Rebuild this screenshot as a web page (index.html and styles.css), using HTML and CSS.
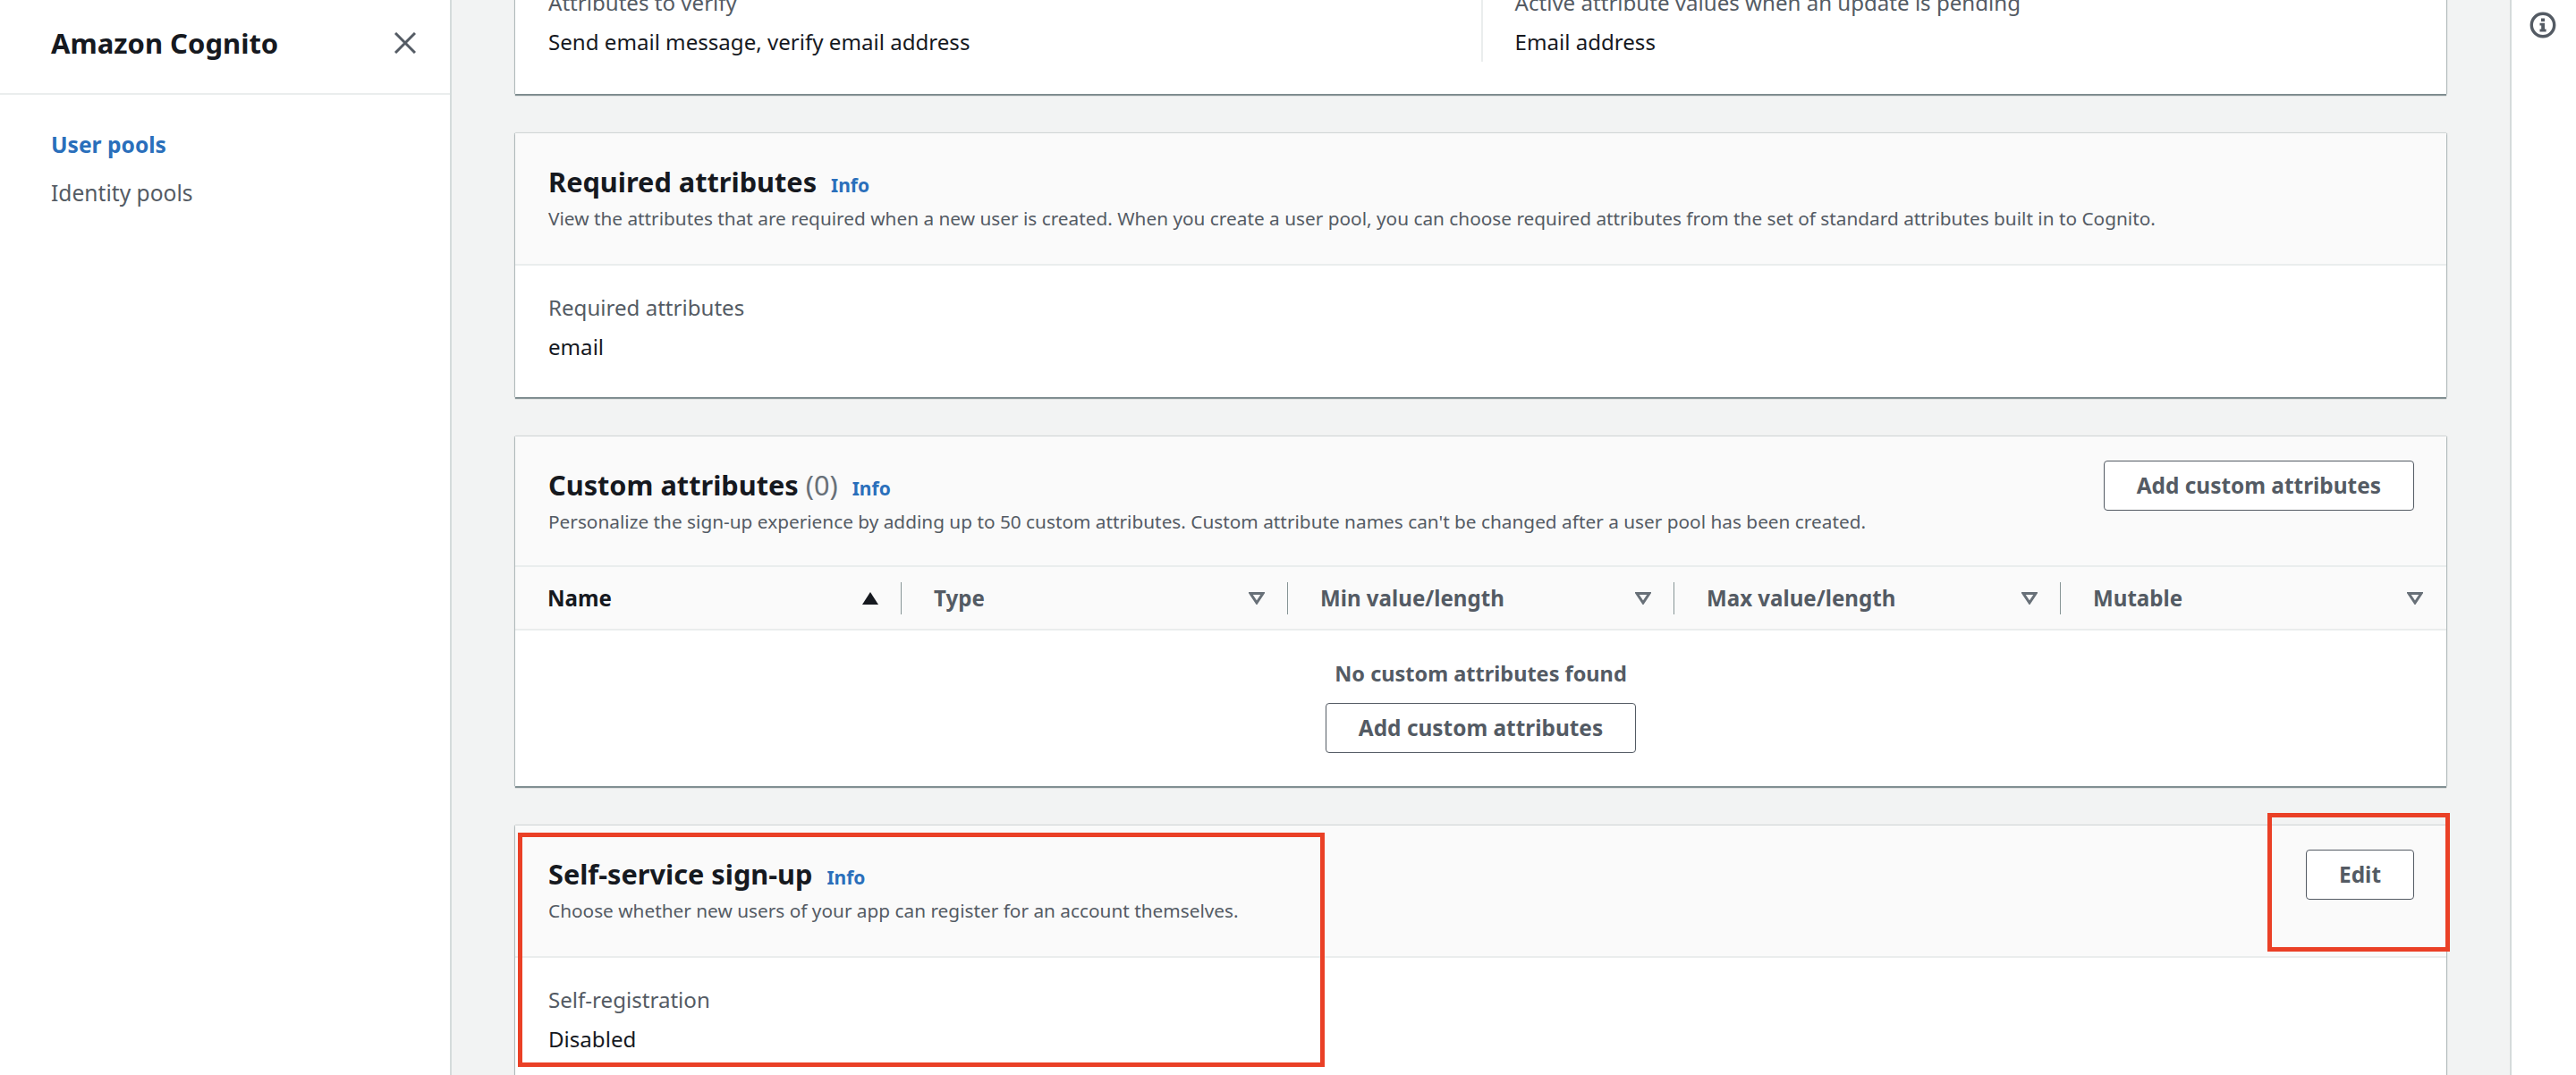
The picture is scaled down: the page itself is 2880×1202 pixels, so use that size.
FILE: index.html
```html
<!DOCTYPE html>
<html lang="en">
<head>
<meta charset="utf-8">
<title>Amazon Cognito</title>
<link rel="stylesheet" href="styles.css">
</head>
<body>
<aside class="sidebar">
  <div class="side-head">
    <span class="side-title">Amazon Cognito</span>
    <svg class="close" viewBox="0 0 24 24" width="24" height="24"><path d="M1 1 23 23M23 1 1 23"/></svg>
  </div>
  <nav class="side-nav">
    <a class="nav-item active">User pools</a>
    <a class="nav-item">Identity pools</a>
  </nav>
</aside>
<main class="main">
  <section class="card card-first">
    <div class="body two-col">
      <div class="col">
        <div class="label">Attributes to verify</div>
        <div class="value">Send email message, verify email address</div>
      </div>
      <div class="col col-right">
        <div class="label">Active attribute values when an update is pending</div>
        <div class="value">Email address</div>
      </div>
    </div>
  </section>
  <section class="card">
    <header class="head">
      <div>
        <h2 class="title">Required attributes <a class="info">Info</a></h2>
        <p class="desc">View the attributes that are required when a new user is created. When you create a user pool, you can choose required attributes from the set of standard attributes built in to Cognito.</p>
      </div>
    </header>
    <div class="body">
      <div class="label">Required attributes</div>
      <div class="value">email</div>
    </div>
  </section>
  <section class="card">
    <header class="head head-table">
      <div>
        <h2 class="title">Custom attributes <span class="count">(0)</span> <a class="info">Info</a></h2>
        <p class="desc">Personalize the sign-up experience by adding up to 50 custom attributes. Custom attribute names can't be changed after a user pool has been created.</p>
      </div>
      <button class="btn">Add custom attributes</button>
    </header>
    <div class="thead">
      <div class="th"><div class="th-in sorted"><span>Name</span><svg class="tri" viewBox="0 0 18 14" width="18" height="14"><path class="fill" d="M9 0 18 14H0Z"/></svg></div></div>
      <div class="th"><div class="th-in"><span>Type</span><svg class="tri" viewBox="0 0 18 14" width="18" height="14"><path d="M2 1.5H16L9 12Z"/></svg></div></div>
      <div class="th"><div class="th-in"><span>Min value/length</span><svg class="tri" viewBox="0 0 18 14" width="18" height="14"><path d="M2 1.5H16L9 12Z"/></svg></div></div>
      <div class="th"><div class="th-in"><span>Max value/length</span><svg class="tri" viewBox="0 0 18 14" width="18" height="14"><path d="M2 1.5H16L9 12Z"/></svg></div></div>
      <div class="th"><div class="th-in last"><span>Mutable</span><svg class="tri" viewBox="0 0 18 14" width="18" height="14"><path d="M2 1.5H16L9 12Z"/></svg></div></div>
    </div>
    <div class="empty">
      <div class="empty-text">No custom attributes found</div>
      <button class="btn">Add custom attributes</button>
    </div>
  </section>
  <section class="card">
    <header class="head">
      <div>
        <h2 class="title">Self-service sign-up <a class="info">Info</a></h2>
        <p class="desc">Choose whether new users of your app can register for an account themselves.</p>
      </div>
      <button class="btn">Edit</button>
    </header>
    <div class="body">
      <div class="label">Self-registration</div>
      <div class="value">Disabled</div>
    </div>
  </section>
</main>
<aside class="tools">
  <svg class="info-icon" viewBox="0 0 30 30" width="30" height="30">
    <circle cx="15" cy="15" r="12.7"/>
    <rect class="solid" x="13" y="7.5" width="4" height="3.6"/>
    <path class="solid" d="M11.5 12.8H17V19.4H18.6V22.6H11.5V19.4H13.2V15.6H11.5Z"/>
  </svg>
</aside>
<div class="mark mark-a"></div>
<div class="mark mark-b"></div>
</body>
</html>
```
FILE: styles.css
```css
* { box-sizing: border-box; }
html, body { margin: 0; padding: 0; }
body {
  display: flex;
  width: 2880px;
  height: 1202px;
  overflow: hidden;
  position: relative;
  background: #fff;
  font-family: "Noto Sans", "Open Sans", sans-serif;
  font-size: 24.1px;
  color: #16191f;
}
.sidebar {
  flex: 0 0 505px;
  border-right: 2px solid #d5dbdb;
  background: #fff;
}
.side-head {
  height: 106px;
  border-bottom: 2px solid #eaeded;
  padding: 0 37px 0 57px;
  display: flex;
  align-items: flex-start;
  justify-content: space-between;
}
.side-title {
  font-size: 31px;
  font-weight: 700;
  line-height: 46px;
  margin-top: 25px;
}
.close { margin-top: 36px; margin-right: 1px; }
.close path { fill: none; stroke: #545b64; stroke-width: 3; }
.side-nav { display: flex; flex-direction: column; padding-top: 29px; padding-left: 57px; }
.nav-item { line-height: 54px; color: #545b64; font-size: 24.6px; }
.nav-item.active { color: #2a6fbb; font-weight: 700; }
.main {
  flex: 0 0 2301px;
  background: #f2f3f3;
  padding: 0 71px;
  display: flex;
  flex-direction: column;
  gap: 44px;
  overflow: hidden;
}
.card {
  flex: none;
  background: #fff;
  box-shadow: 0 2px 1px rgba(0, 28, 36, .45), 1px 0 1px rgba(0, 28, 36, .2), -1px 0 1px rgba(0, 28, 36, .2), 0 -1px 1px rgba(0, 28, 36, .08);
}
.card-first { margin-top: -44px; }
.head {
  height: 148px;
  background: #fafafa;
  border-bottom: 2px solid #eaeded;
  padding: 31px 36px 0 37px;
  display: flex;
  justify-content: space-between;
  align-items: flex-start;
}
.head-table { height: 146px; }
.title {
  margin: 0;
  font-size: 30.7px;
  font-weight: 700;
  line-height: 46px;
}
.count { font-weight: 400; color: #687078; }
.info { font-size: 21px; font-weight: 700; color: #2a6fbb; margin-left: 8px; }
.desc { margin: 0; font-size: 20.8px; line-height: 28px; color: #545b64; }
.btn {
  font: 700 24.4px/52px "Noto Sans", "Open Sans", sans-serif;
  height: 56px;
  padding: 0 36px;
  color: #545b64;
  background: #fff;
  border: 1px solid #545b64;
  border-radius: 4px;
  margin-top: -4px;
}
.body { padding: 25px 37px 34px; }
.label { line-height: 44px; color: #545b64; }
.value { line-height: 44px; color: #16191f; }
.two-col { display: grid; grid-template-columns: 1fr 1fr; }
.col-right { border-left: 2px solid #eaeded; padding-left: 36px; margin-bottom: 2px; }
.thead {
  display: grid;
  grid-template-columns: repeat(5, 432px);
  height: 71px;
  background: #fafafa;
  border-bottom: 2px solid #eaeded;
}
.th { display: flex; align-items: center; }
.th-in {
  flex: 1;
  height: 36px;
  padding: 0 25px 0 36px;
  display: flex;
  align-items: center;
  justify-content: space-between;
  border-right: 1px solid #879596;
  font-weight: 700;
  color: #545b64;
}
.th-in.last { border-right: 0; padding-right: 27px; }
.th-in.sorted { color: #16191f; }
.tri path { fill: none; stroke: #687078; stroke-width: 3; }
.tri path.fill { fill: #16191f; stroke: none; }
.empty {
  height: 174px;
  display: flex;
  flex-direction: column;
  align-items: center;
  padding-top: 26px;
}
.empty-text { font-size: 23.5px; font-weight: 700; color: #545b64; line-height: 44px; margin-bottom: 11px; }
.empty .btn { margin-top: 0; }
.tools {
  flex: 1;
  border-left: 2px solid #d5dbdb;
  background: #fff;
  padding: 13px 0 0 20px;
}
.info-icon circle { fill: none; stroke: #545b64; stroke-width: 3.4; }
.info-icon .solid { fill: #545b64; }
.mark { position: absolute; border: 5px solid #ea4026; pointer-events: none; }
.mark-a { left: 579px; top: 931px; width: 902px; height: 262px; }
.mark-b { left: 2535px; top: 909px; width: 204px; height: 155px; }
```
